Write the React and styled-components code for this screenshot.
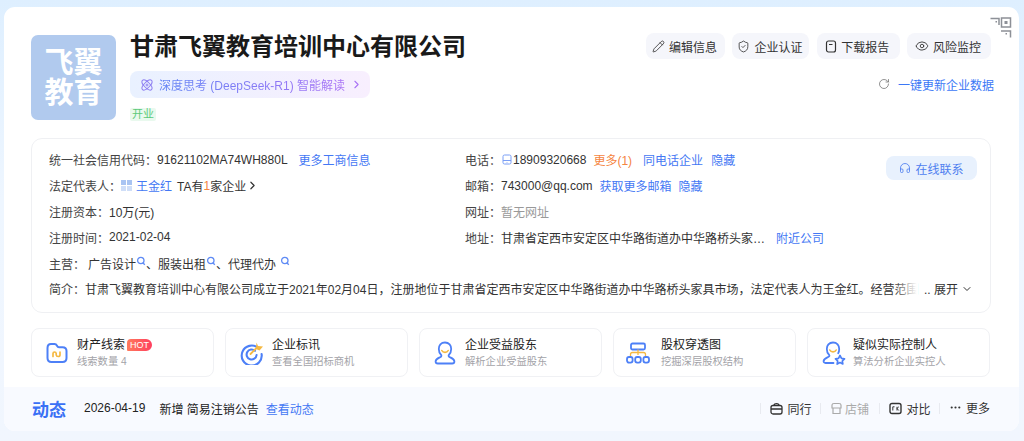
import React from 'react';
import styled, { createGlobalStyle } from 'styled-components';
import { Pencil, ShieldCheck, RotateCw, Eye, ChevronRight, ChevronDown, Headphones, Ellipsis } from 'lucide-react';

const GlobalStyle = createGlobalStyle`
  html, body {
    margin: 0;
    padding: 0;
  }
  body {
    width: 1024px;
    height: 441px;
    overflow: hidden;
    background: linear-gradient(180deg, #deefff 0%, #eef6ff 45%, #f1f6fe 100%);
    font-family: "Liberation Sans", "Noto Sans CJK SC", sans-serif;
    font-size: 12px;
    color: #222;
  }
  * {
    box-sizing: border-box;
  }
  svg {
    flex-shrink: 0;
  }
`;

const Card = styled.div`
  position: relative;
  width: 1015px;
  height: 424px;
  margin: 7px 0 0 4px;
  background: #fff;
  border-radius: 11px;
  overflow: hidden;
  display: flex;
  flex-direction: column;
`;

const Main = styled.div`
  flex: 1;
  padding: 28px 29px 0 27px;
`;

const QrCorner = styled.svg`
  position: absolute;
  top: 10px;
  right: 7px;
`;

const Head = styled.div`
  display: flex;
  height: 103px;
`;

const Logo = styled.div`
  width: 85px;
  height: 85px;
  border-radius: 7px;
  background: #b1caee;
  color: #fff;
  font-size: 29px;
  font-weight: 700;
  line-height: 30px;
  text-align: center;
  padding: 13px 10px 0;
  margin-right: 14px;
  flex-shrink: 0;
`;

const HeadInfo = styled.div`
  flex: 1;
  display: flex;
  flex-direction: column;
  align-items: flex-start;
`;

const Title = styled.h1`
  margin: -3px 0 0;
  font-size: 24px;
  line-height: 30px;
  font-weight: 700;
  color: #1a1a1a;
`;

const AiPill = styled.div`
  display: flex;
  align-items: center;
  height: 27px;
  width: 240px;
  margin-top: 9px;
  padding: 0 10px;
  border-radius: 8px;
  background: linear-gradient(90deg, #e9f1ff 0%, #f8effe 100%);
  font-size: 12px;
  white-space: nowrap;
`;

const AiText = styled.span`
  margin: 0 5px;
  background: linear-gradient(90deg, #5f83f5 0%, #a972f5 100%);
  -webkit-background-clip: text;
  background-clip: text;
  color: transparent;
`;

const StatusTag = styled.span`
  margin-top: 10px;
  height: 13px;
  padding: 0 2px;
  border-radius: 2px;
  background: #e9f9ee;
  color: #5cc97a;
  font-size: 11px;
  line-height: 13px;
`;

const HeadActions = styled.div`
  display: flex;
  flex-direction: column;
  align-items: flex-end;
  margin-top: -2px;
`;

const ButtonRow = styled.div`
  display: flex;
  gap: 7.3px;
  margin-right: -1px;
`;

const ActionButton = styled.div`
  display: flex;
  align-items: center;
  justify-content: center;
  gap: 4px;
  height: 26px;
  width: ${(p) => p.$w}px;
  padding-right: 2px;
  border-radius: 8px;
  background: #f5f6fb;
  color: #333;
  white-space: nowrap;
`;

const RefreshRow = styled.div`
  display: flex;
  align-items: center;
  gap: 8px;
  margin-top: 16px;
  margin-right: -4px;
  height: 18px;
  color: #3c78f6;
`;

const InfoPanel = styled.div`
  height: 175px;
  margin-right: -1px;
  padding: 8px 13px 0 17px;
  border: 1px solid #eff0f3;
  border-radius: 11px;
`;

const TopGrid = styled.div`
  display: grid;
  grid-template-columns: 416px 1fr auto;
  grid-auto-rows: 25.8px;
`;

const Row = styled.div`
  display: flex;
  align-items: center;
  height: 25.8px;
  white-space: nowrap;
  color: #333;
`;

const Label = styled.span`
  color: #444;
`;

const Link = styled.span`
  color: #4478f4;
  margin-left: ${(p) => p.$ml || 0}px;
`;

const Orange = styled.span`
  color: #f5853f;
  margin-left: ${(p) => p.$ml || 0}px;
`;

const Muted = styled.span`
  color: #999;
`;

const TextSpan = styled.span`
  margin-left: ${(p) => p.$ml || 0}px;
`;

const ContactButton = styled.div`
  grid-column: 3;
  grid-row: 1 / span 4;
  align-self: start;
  display: flex;
  align-items: center;
  justify-content: center;
  gap: 4px;
  width: 91px;
  height: 24px;
  margin-top: 9px;
  border-radius: 8px;
  background: #e8f1fd;
  color: #4f7ff0;
`;

const Summary = styled.div`
  position: relative;
  &::after {
    content: '';
    position: absolute;
    right: 0;
    top: 0;
    bottom: 0;
    width: 24px;
    background: linear-gradient(90deg, rgba(255, 255, 255, 0), #fff 95%);
  }
`;

const Expand = styled.span`
  display: flex;
  align-items: center;
  gap: 3px;
  margin: 0 4px 0 auto;
  color: #333;
`;

const Shortcuts = styled.div`
  display: grid;
  grid-template-columns: repeat(5, 183px);
  gap: 11px;
  margin-top: 15px;
`;

const Shortcut = styled.div`
  display: flex;
  align-items: center;
  height: 49px;
  padding-left: 14px;
  border: 1px solid #f0f1f4;
  border-radius: 8px;
`;

const ShortcutIcon = styled.svg`
  margin-left: ${(p) => p.$ml || 0}px;
  margin-right: ${(p) => p.$mr}px;
`;

const ShortcutTitle = styled.div`
  display: flex;
  align-items: center;
  font-size: 12px;
  line-height: 16px;
  color: #222;
`;

const ShortcutSub = styled.div`
  margin-top: 2px;
  font-size: 10.3px;
  line-height: 14px;
  color: #a3a3a8;
`;

const Hot = styled.span`
  margin-left: 2px;
  padding: 0 3px;
  height: 12px;
  border-radius: 4px 6px 6px 1px;
  background: linear-gradient(90deg, #ff7a5c, #ff3f5f);
  color: #fff;
  font-size: 9px;
  line-height: 12px;
`;

const Footer = styled.div`
  display: flex;
  align-items: center;
  height: 44px;
  padding: 0 29px 2px 28px;
  background: #f8faff;
`;

const FooterTitle = styled.span`
  font-size: 17px;
  font-weight: 700;
  color: #3a70f5;
  margin-right: 18px;
`;

const FooterTools = styled.div`
  display: flex;
  align-items: center;
  margin-left: auto;
`;

const Tool = styled.div`
  display: flex;
  align-items: center;
  gap: ${(p) => (p.$off ? 2 : 4)}px;
  width: ${(p) => (p.$last ? 'auto' : '58.5px')};
  color: ${(p) => (p.$off ? '#aaa' : '#333')};
  padding-left: 9px;
  margin-top: ${(p) => (p.$last ? -2 : 0)}px;
  white-space: nowrap;
`;

const Divider = styled.span`
  width: 1px;
  height: 11px;
  background: #e8eaf0;
`;

const SearchMark = styled.svg`
  transform: translateY(-2px);
  margin-left: ${(p) => p.$ml || 0}px;
`;

const FolderIcon = () => (
  <ShortcutIcon $mr={9} width="22" height="22" viewBox="0 0 22 22" fill="none">
    <path d="M1.5 6C1.5 3.5 3 2 5 2H8.5C9.8 2 10.4 2.6 11 3.8C11.5 4.8 12 5.2 13 5.2H16.5C19 5.2 20.5 6.8 20.5 9V16C20.5 18.5 19 20 16.5 20H5.5C3 20 1.5 18.5 1.5 16Z" stroke="#4d80f7" strokeWidth="2" />
    <path d="M7 14.5V11.5C7 9.5 10 9.5 10.2 11.5V13C10.4 15 14 15 14 13V10" stroke="#f5b942" strokeWidth="1.7" strokeLinecap="round" />
  </ShortcutIcon>
);

const TargetIcon = () => (
  <ShortcutIcon $mr={8} width="24" height="24" viewBox="0 0 24 24" fill="none">
    <path d="M18 6.8A10 10 0 1 0 21.6 13" stroke="#4d80f7" strokeWidth="2.1" strokeLinecap="round" />
    <path d="M15 9.8A5 5 0 1 0 16.6 14" stroke="#4d80f7" strokeWidth="2.1" strokeLinecap="round" />
    <path d="M10.5 13L17 6.5" stroke="#f5b942" strokeWidth="1.8" strokeLinecap="round" />
    <path d="M16.5 1.5L18 5L23 5.5L19.5 9.5L16 8Z" fill="#f5b942" />
  </ShortcutIcon>
);

const PersonIcon = () => (
  <ShortcutIcon $mr={9} width="22" height="24" viewBox="0 0 22 24" fill="none">
    <path d="M11 1.5C7 1.5 4.8 4.5 4.8 8C4.8 10.5 5.6 12.6 7.2 14C7.6 14.6 7.4 15.6 6.6 16C4.6 17 1.6 18 1.6 20.5C1.6 21.8 2.6 22.5 3.8 22.5H18.2C19.4 22.5 20.4 21.8 20.4 20.5C20.4 18 17.4 17 15.4 16C14.6 15.6 14.4 14.6 14.8 14C16.4 12.6 17.2 10.5 17.2 8C17.2 4.5 15 1.5 11 1.5Z" stroke="#4d80f7" strokeWidth="1.8" />
    <path d="M7.8 9.5C9 12 13 12 14.2 9.5" stroke="#f5b942" strokeWidth="1.6" strokeLinecap="round" />
  </ShortcutIcon>
);

const TreeIcon = () => (
  <ShortcutIcon $ml={-2} $mr={11} width="24" height="22" viewBox="0 0 24 22" fill="none">
    <rect x="5" y="1.5" width="14" height="6" rx="1.5" stroke="#4d80f7" strokeWidth="1.8" />
    <path d="M12 7.5V13M4.5 15V12.5C4.5 11 5 10.5 6.5 10.5H17.5C19 10.5 19.5 11 19.5 12.5V15" stroke="#f5b942" strokeWidth="1.3" />
    <rect x="1" y="15" width="5.6" height="5.6" rx="2" stroke="#4d80f7" strokeWidth="1.8" />
    <rect x="9.2" y="15" width="5.6" height="5.6" rx="2" stroke="#4d80f7" strokeWidth="1.8" />
    <rect x="17.4" y="15" width="5.6" height="5.6" rx="2" stroke="#4d80f7" strokeWidth="1.8" />
  </ShortcutIcon>
);

const ControllerIcon = () => (
  <ShortcutIcon $mr={7} width="24" height="24" viewBox="0 0 24 24" fill="none">
    <path d="M11.5 22H3.5C2.3 22 1.4 21.2 1.6 20C2 17.6 4.8 16.8 6.6 15.8C7.4 15.4 7.6 14.6 7.2 14C5.6 12.6 4.8 10.5 4.8 8C4.8 4.5 7 1.5 11 1.5C15 1.5 17.2 4.5 17.2 8C17.2 9.5 17 11 16.2 12.2" stroke="#4d80f7" strokeWidth="1.8" strokeLinecap="round" />
    <path d="M7.8 9C9 11.5 13 11.5 14.2 9" stroke="#f5b942" strokeWidth="1.6" strokeLinecap="round" />
    <path d="M18 14.5L19.5 17.3L22.5 17.8L20.3 20L20.8 23L18 21.6L15.2 23L15.7 20L13.5 17.8L16.5 17.3Z" stroke="#4d80f7" strokeWidth="1.7" strokeLinejoin="round" />
  </ShortcutIcon>
);

const Search = ({ ml }) => (
  <SearchMark $ml={ml} width="10" height="10" viewBox="0 0 10 10" fill="none">
    <circle cx="4.8" cy="4.5" r="3.2" stroke="#5f8bf5" strokeWidth="1.3" />
    <path d="M7 7L8.8 8.8" stroke="#5f8bf5" strokeWidth="1.3" />
  </SearchMark>
);

const shortcuts = [
  { title: '财产线索', sub: '线索数量 4', Icon: FolderIcon, hot: true },
  { title: '企业标讯', sub: '查看全国招标商机', Icon: TargetIcon },
  { title: '企业受益股东', sub: '解析企业受益股东', Icon: PersonIcon },
  { title: '股权穿透图', sub: '挖掘深层股权结构', Icon: TreeIcon },
  { title: '疑似实际控制人', sub: '算法分析企业实控人', Icon: ControllerIcon },
];

export default function App() {
  return (
    <>
      <GlobalStyle />
      <Card>
        <QrCorner width="22" height="21" viewBox="0 0 22 21" fill="none">
          <path d="M0.5 1.5H9V8" stroke="#8d9097" strokeWidth="1.5" />
          <rect x="5.5" y="4" width="1.5" height="1.5" fill="#8d9097" />
          <rect x="11.5" y="1" width="9" height="9" stroke="#8d9097" strokeWidth="1.5" />
          <rect x="14.5" y="4" width="3" height="3" fill="#8d9097" />
          <path d="M11 14H20.5V20.5" stroke="#8d9097" strokeWidth="1.5" />
          <rect x="15.5" y="16" width="1.5" height="1.5" fill="#8d9097" />
        </QrCorner>
        <Main>
          <Head>
            <Logo>飞翼教育</Logo>
            <HeadInfo>
              <Title>甘肃飞翼教育培训中心有限公司</Title>
              <AiPill>
                <svg width="14" height="14" viewBox="0 0 14 14" fill="none" stroke="#8f80f2" strokeWidth="1">
                  <ellipse cx="7" cy="7" rx="6.4" ry="2.8" transform="rotate(45 7 7)" />
                  <ellipse cx="7" cy="7" rx="6.4" ry="2.8" transform="rotate(-45 7 7)" />
                  <circle cx="7" cy="7" r="1" />
                </svg>
                <AiText>深度思考 (DeepSeek-R1) 智能解读</AiText>
                <ChevronRight size={13} color="#a972f5" />
              </AiPill>
              <StatusTag>开业</StatusTag>
            </HeadInfo>
            <HeadActions>
              <ButtonRow>
                <ActionButton $w={79}><Pencil size={13} strokeWidth={1.5} />编辑信息</ActionButton>
                <ActionButton $w={77}><ShieldCheck size={13} strokeWidth={1.5} />企业认证</ActionButton>
                <ActionButton $w={83}>
                  <svg width="12" height="13" viewBox="0 0 12 13" fill="none" stroke="#333" strokeWidth="1.2">
                    <rect x="1.5" y="1" width="9" height="11" rx="2" />
                    <path d="M4 4.5H7.5" />
                  </svg>
                  下载报告
                </ActionButton>
                <ActionButton $w={84}><Eye size={14} strokeWidth={1.5} />风险监控</ActionButton>
              </ButtonRow>
              <RefreshRow>
                <RotateCw size={12} color="#777" strokeWidth={1.6} />
                一键更新企业数据
              </RefreshRow>
            </HeadActions>
          </Head>
          <InfoPanel>
            <TopGrid>
              <Row>
                <Label>统一社会信用代码：</Label>91621102MA74WH880L
                <Link $ml={11}>更多工商信息</Link>
              </Row>
              <Row>
                <Label>电话：</Label>
                <svg width="10" height="11" viewBox="0 0 10 11" fill="none" stroke="#7a9ef5" strokeWidth="1" style={{ margin: '0 1px' }}>
                  <rect x="1" y="1" width="8" height="9" rx="1.5" />
                  <path d="M1 6.5H9M5 8V8.6" />
                </svg>
                18909320668
                <Orange $ml={7}>更多(1)</Orange>
                <Link $ml={11}>同电话企业</Link>
                <Link $ml={8}>隐藏</Link>
              </Row>
              <ContactButton><Headphones size={12} strokeWidth={1.7} />在线联系</ContactButton>
              <Row>
                <Label>法定代表人：</Label>
                <svg width="11" height="11" viewBox="0 0 11 11" style={{ marginRight: 4 }}>
                  <rect width="5" height="5" fill="#a9c4f2" />
                  <rect x="6" width="5" height="5" fill="#a9c4f2" />
                  <rect y="6" width="5" height="5" fill="#cfdef8" />
                  <rect x="6" y="6" width="5" height="5" fill="#cfdef8" />
                </svg>
                <Link>王金红</Link>
                <TextSpan $ml={5}>TA有</TextSpan><Orange>1</Orange>家企业
                <ChevronRight size={13} strokeWidth={2.2} />
              </Row>
              <Row>
                <Label>邮箱：</Label>743000@qq.com
                <Link $ml={7}>获取更多邮箱</Link>
                <Link $ml={7}>隐藏</Link>
              </Row>
              <Row><Label>注册资本：</Label>10万(元)</Row>
              <Row><Label>网址：</Label><Muted>暂无网址</Muted></Row>
              <Row><Label>注册时间：</Label>2021-02-04</Row>
              <Row>
                <Label>地址：</Label>甘肃省定西市安定区中华路街道办中华路桥头家…
                <Link $ml={11}>附近公司</Link>
              </Row>
            </TopGrid>
            <Row>
              <Label>主营：</Label>
              <TextSpan $ml={3}>广告设计</TextSpan><Search />、服装出租<Search />、代理代办
              <Search ml={4} />
            </Row>
            <Row>
              <Label>简介：</Label>
              <Summary>甘肃飞翼教育培训中心有限公司成立于2021年02月04日，注册地位于甘肃省定西市安定区中华路街道办中华路桥头家具市场，法定代表人为王金红。经营范围</Summary>
              <Expand>.. 展开<ChevronDown size={12} /></Expand>
            </Row>
          </InfoPanel>
          <Shortcuts>
            {shortcuts.map(({ title, sub, Icon, hot }) => (
              <Shortcut key={title}>
                <Icon />
                <div>
                  <ShortcutTitle>{title}{hot && <Hot>HOT</Hot>}</ShortcutTitle>
                  <ShortcutSub>{sub}</ShortcutSub>
                </div>
              </Shortcut>
            ))}
          </Shortcuts>
        </Main>
        <Footer>
          <FooterTitle>动态</FooterTitle>
          <span>2026-04-19</span>
          <TextSpan $ml={14}>新增 简易注销公告</TextSpan>
          <Link $ml={7}>查看动态</Link>
          <FooterTools>
            <Divider />
            <Tool>
              <svg width="13" height="13" viewBox="0 0 13 13" fill="none" stroke="#333" strokeWidth="1.3">
                <rect x="1" y="3.5" width="11" height="8.5" rx="2" />
                <path d="M4 3.5C4 1 9 1 9 3.5M1 7H12" />
              </svg>
              同行
            </Tool>
            <Divider />
            <Tool $off>
              <svg width="13" height="13" viewBox="0 0 13 13" fill="none" stroke="#aaa" strokeWidth="1.2">
                <path d="M2 3C2 2 3 1.5 4 1.5H9C10 1.5 11 2 11 3V6H2ZM3 6V11.5H10V6" />
              </svg>
              店铺
            </Tool>
            <Divider />
            <Tool>
              <svg width="13" height="13" viewBox="0 0 13 13" fill="none" stroke="#333" strokeWidth="1.4">
                <rect x="1" y="1.5" width="11" height="10" rx="2" />
                <path d="M3.8 8.5V4.8H5.5M8 4.8V8.5M8 6.5L9.8 4.8M8 6.5L9.8 8.5" strokeWidth="1" />
              </svg>
              对比
            </Tool>
            <Divider />
            <Tool $last><Ellipsis size={13} />更多</Tool>
          </FooterTools>
        </Footer>
      </Card>
    </>
  );
}
